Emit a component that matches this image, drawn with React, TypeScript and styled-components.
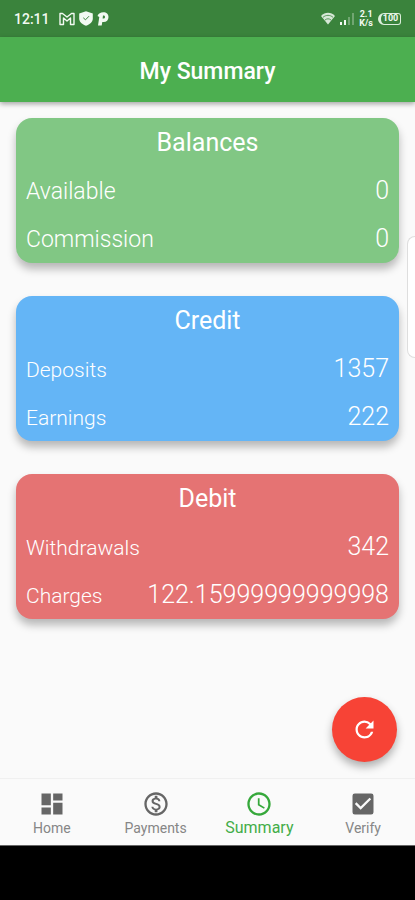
import React from "react";
import styled, { createGlobalStyle } from "styled-components";
import {
  MdAccessTime,
  MdCheckBox,
  MdDashboard,
  MdOutlineMonetizationOn,
  MdRefresh,
} from "react-icons/md";

const GlobalStyle = createGlobalStyle`
  * { box-sizing: border-box; }
  body {
    margin: 0;
    background: #fafafa;
    font-family: Roboto, "Liberation Sans", sans-serif;
  }
`;

const Screen = styled.div`
  display: flex;
  flex-direction: column;
  min-height: 100vh;
  background: #fafafa;
`;

const StatusBar = styled.div`
  display: flex;
  align-items: center;
  justify-content: space-between;
  height: 37px;
  padding: 0 14px;
  background: #3a833c;
  color: #f2faf2;
`;

const StatusGroup = styled.div<{ $gap: number }>`
  display: flex;
  align-items: center;
  gap: ${(p) => p.$gap}px;
`;

const Clock = styled.span`
  margin-right: 5px;
  font-size: 14px;
  font-weight: 500;
  line-height: 16px;
`;

const Speed = styled.span`
  display: flex;
  flex-direction: column;
  align-items: center;
  font-size: 9px;
  font-weight: 700;
  line-height: 9px;
`;

const AppBar = styled.header`
  display: flex;
  align-items: center;
  justify-content: center;
  height: 65px;
  background: #4caf50;
  color: #ffffff;
  box-shadow: 0 2px 5px rgba(0, 0, 0, 0.35);
`;

const PageTitle = styled.h1`
  margin: 0;
  padding-top: 4px;
  font-size: 23px;
  font-weight: 500;
  line-height: 28px;
`;

const Content = styled.main`
  position: relative;
  display: flex;
  flex: 1;
  flex-direction: column;
  gap: 33px;
  padding: 16px 16px 24px;
`;

const Card = styled.section<{ $color: string }>`
  border-radius: 16px;
  background: ${(p) => p.$color};
  color: #ffffff;
  box-shadow: 0 6px 9px rgba(0, 0, 0, 0.27);
`;

const CardTitle = styled.h2`
  margin: 0;
  font-size: 25px;
  font-weight: 400;
  line-height: 49px;
  text-align: center;
`;

const Rows = styled.dl`
  margin: 0;
`;

const Row = styled.div`
  display: flex;
  align-items: baseline;
  justify-content: space-between;
  height: 48px;
  padding: 0 10px;
  font-weight: 300;
  line-height: 48px;
`;

const Label = styled.dt<{ $large?: boolean }>`
  font-size: ${(p) => (p.$large ? 23 : 21)}px;
`;

const Amount = styled.dd`
  margin: 0;
  font-size: 25px;
`;

const EdgeHandle = styled.div`
  position: absolute;
  top: 134px;
  right: 0;
  width: 8px;
  height: 122px;
  border: 1px solid #dedede;
  border-right: 0;
  border-radius: 12px 0 0 12px;
  background: #ffffff;
`;

const RefreshButton = styled.button`
  position: absolute;
  right: 18px;
  bottom: 16px;
  display: grid;
  place-items: center;
  width: 65px;
  height: 65px;
  padding: 0;
  border: 0;
  border-radius: 50%;
  background: #f74336;
  color: #ffffff;
  box-shadow: 0 5px 9px rgba(0, 0, 0, 0.3);
  cursor: pointer;
`;

const NavBar = styled.nav`
  display: grid;
  grid-template-columns: repeat(4, 1fr);
  height: 67px;
  border-top: 1px solid #f0f0f0;
  background: #fafafa;
`;

const NavLink = styled.a<{ $active?: boolean }>`
  display: flex;
  flex-direction: column;
  align-items: center;
  padding-top: 11px;
  color: ${(p) => (p.$active ? "#36a83b" : "#666666")};
  text-decoration: none;
`;

const NavText = styled.span<{ $active?: boolean }>`
  color: ${(p) => (p.$active ? "#43ad48" : "#868686")};
  font-size: ${(p) => (p.$active ? 16 : 14)}px;
  line-height: 20px;
`;

const SystemBar = styled.div`
  height: 55px;
  border-top: 1px solid #666666;
  background: #000000;
`;

const MailIcon = () => (
  <svg width="16" height="14" viewBox="0 0 16 14" fill="none" stroke="currentColor" strokeWidth="1.4" aria-hidden="true">
    <path d="M1 12.5V1.5h2.5L8 5l4.500-3.500H15v11h-3.500V6L8 9 4.500 6v6.500Z" strokeLinejoin="round" />
  </svg>
);

const ShieldIcon = () => (
  <svg width="14" height="15" viewBox="0 0 14 15" aria-hidden="true">
    <path d="M7 .3 13.800 2.500v5c0 3.500-3 6-6.800 7.200C3.200 13.500.2 11 .2 7.500v-5Z" fill="currentColor" />
    <path d="m4.300 6.800 2.200 2 3.500-3.600" fill="none" stroke="#3a833c" strokeWidth="1" />
  </svg>
);

const ParkingIcon = () => (
  <svg width="12" height="14" viewBox="0 0 12 14" aria-hidden="true">
    <path
      d="M.5 4C1.500 1.500 3.500.3 6.300.3c3.200 0 5.200 1.900 5.200 4.700 0 3-2 5-4.900 5.100H5.300L4.700 13.500H1L2.300 5Z"
      fill="currentColor"
    />
    <path d="M6 3.500 5.600 6.500c1.600.2 2.400-.5 2.400-1.600C8 4 7.300 3.500 6 3.500Z" fill="#3a833c" />
  </svg>
);

const WifiIcon = () => (
  <svg width="14" height="13" viewBox="0 0 14 13" aria-hidden="true">
    <path d="M0 4C4-.3 10-.3 14 4L7 12.500Z" fill="currentColor" opacity=".85" />
    <path d="M2 5.300c3-2.600 7-2.600 10 0M4 8c2-1.600 4-1.600 6 0" fill="none" stroke="#3a833c" strokeWidth=".8" />
  </svg>
);

const SignalIcon = () => (
  <svg width="14" height="12" viewBox="0 0 14 12" fill="currentColor" aria-hidden="true">
    <path d="M0 9h2v3H0zM4 7h2v5H4z" />
    <path d="M8 4h2v8H8zM12 0h2v12h-2z" opacity=".3" />
  </svg>
);

const BatteryShell = styled.span`
  display: grid;
  place-items: center;
  width: 23px;
  height: 12px;
  border: 1px solid #dcefdc;
  border-left-width: 3px;
  border-radius: 6px 3px 3px 6px;
  font-size: 9px;
  font-weight: 700;
  line-height: 9px;
`;

const cards = [
  { title: "Balances", color: "#81c784", largeLabels: true, rows: [["Available", "0"], ["Commission", "0"]] },
  { title: "Credit", color: "#64b5f6", rows: [["Deposits", "1357"], ["Earnings", "222"]] },
  { title: "Debit", color: "#e57373", rows: [["Withdrawals", "342"], ["Charges", "122.15999999999998"]] },
];

const navItems = [
  { label: "Home", Icon: MdDashboard },
  { label: "Payments", Icon: MdOutlineMonetizationOn },
  { label: "Summary", Icon: MdAccessTime, active: true },
  { label: "Verify", Icon: MdCheckBox },
];

export default function App() {
  return (
    <Screen>
      <GlobalStyle />
      <StatusBar>
        <StatusGroup $gap={4}>
          <Clock>12:11</Clock>
          <MailIcon />
          <ShieldIcon />
          <ParkingIcon />
        </StatusGroup>
        <StatusGroup $gap={5}>
          <WifiIcon />
          <SignalIcon />
          <Speed>
            <span>2.1</span>
            <span>K/s</span>
          </Speed>
          <BatteryShell>100</BatteryShell>
        </StatusGroup>
      </StatusBar>
      <AppBar>
        <PageTitle>My Summary</PageTitle>
      </AppBar>
      <Content>
        {cards.map((card) => (
          <Card key={card.title} $color={card.color}>
            <CardTitle>{card.title}</CardTitle>
            <Rows>
              {card.rows.map(([label, amount]) => (
                <Row key={label}>
                  <Label $large={card.largeLabels}>{label}</Label>
                  <Amount>{amount}</Amount>
                </Row>
              ))}
            </Rows>
          </Card>
        ))}
        <EdgeHandle />
        <RefreshButton type="button" aria-label="Refresh">
          <MdRefresh size={27} />
        </RefreshButton>
      </Content>
      <NavBar>
        {navItems.map(({ label, Icon, active }) => (
          <NavLink key={label} href="#" $active={active} aria-current={active ? "page" : undefined}>
            <Icon size={28} />
            <NavText $active={active}>{label}</NavText>
          </NavLink>
        ))}
      </NavBar>
      <SystemBar />
    </Screen>
  );
}
